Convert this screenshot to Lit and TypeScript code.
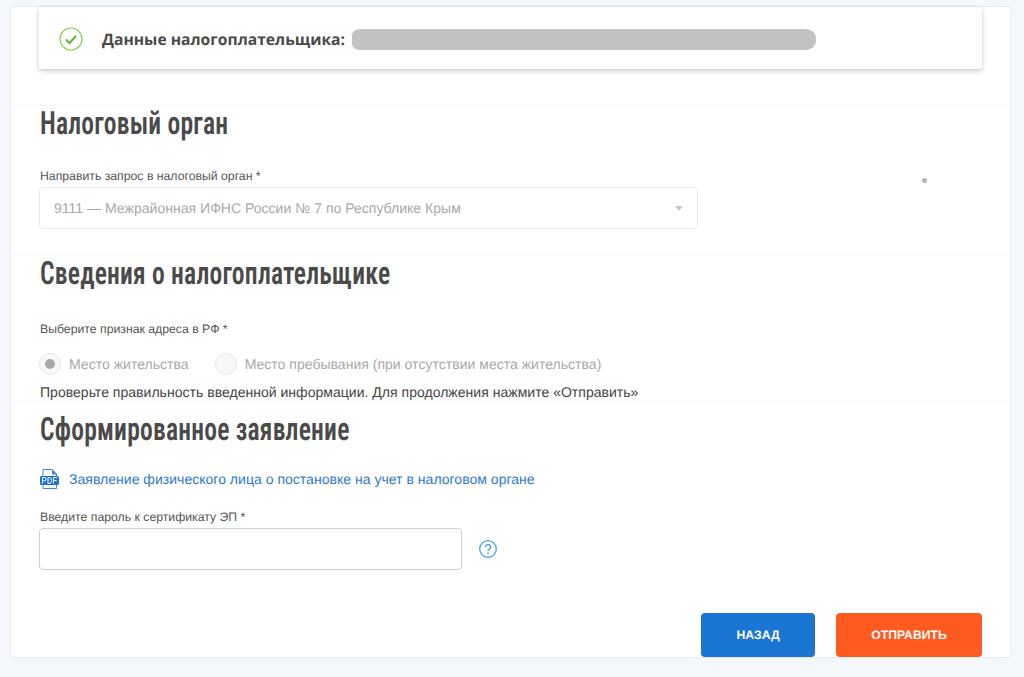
import { LitElement, html, css } from "lit";
import { customElement } from "lit/decorators.js";

@customElement("app-root")
export class AppRoot extends LitElement {
  static styles = css`
    :host { display: block; height: 677px; background: #f4f8fb; font-family: "Liberation Sans", Arial, sans-serif; color: #404040; overflow: hidden; text-rendering: geometricPrecision; }
    * { box-sizing: border-box; }
    .card { position: relative; margin: 6px 13px 0 10px; height: 652px; background: #fff; border: 1px solid #e6ebef; border-radius: 5px; display: flex; flex-direction: column; }
    .notice { margin: 0 28px; height: 62px; flex: none; display: flex; align-items: center; padding: 1px 0 0 20px; background: #fff; border-radius: 2px; box-shadow: 0 2px 5px rgba(0,0,0,.22); }
    .notice svg { flex: none; margin-right: 19px; }
    .notice b { font: 700 15.65px "Open Sans", sans-serif; color: #4a4a4a; white-space: nowrap; }
    .redact { flex: none; width: 464px; height: 21px; margin: 2px 0 0 7px; background: #c2c2c2; border-radius: 8px 10px 10px 8px / 6px 9px 9px 6px; }
    .section { padding: 0 28px; border-top: 1px solid #f7f9fa; flex: none; }
    .s1 { margin-top: 36px; height: 150px; }
    .s2 { height: 146px; }
    .s3 { flex: 1; display: flex; flex-direction: column; }
    h2 { margin: 0 0 0 1px; font: 600 32px/36px "Roboto Condensed", "Liberation Sans Narrow", sans-serif; letter-spacing: .25px; color: #4a4a4a; transform: scaleX(.8); transform-origin: left center; white-space: nowrap; }
    .label { margin-left: 1px; font-size: 12.25px; line-height: 14px; color: #555; }
    .select { display: flex; align-items: center; justify-content: space-between; width: 659px; height: 42px; padding: 0 14px 0 14px; border: 1px solid #e6ebef; border-radius: 4px; font-size: 14.05px; color: #a9a9a9; }
    .caret { width: 0; height: 0; border: 4px solid transparent; border-top: 5px solid #c8c8c8; border-bottom: 0; }
    .s1 h2 { margin-top: -1px; }
    .s1 .label { margin-top: 28px; }
    .s1 .select { margin-top: 4px; }
    .s2 h2 { margin-top: -1px; }
    .s2 .label { margin-top: 31px; }
    .radios { display: flex; align-items: center; margin-top: 17px; font-size: 14.05px; color: #a9a9a9; height: 22px; }
    .radio { width: 22px; height: 22px; border-radius: 50%; border: 1px solid #e8e8e8; background: #f8f8f8; display: flex; align-items: center; justify-content: center; margin-right: 8px; flex: none; }
    .radio i { width: 10px; height: 10px; border-radius: 50%; background: #a8a8a8; }
    .radios span { margin-right: 26px; }
    .check { margin-left: 1px; font-size: 14.05px; line-height: 16px; margin-top: 9px; color: #454545; }
    .s3 h2 { margin-top: 9px; }
    .link { display: flex; align-items: center; gap: 10px; margin-top: 21px; height: 22px; padding-left: 1px; font-size: 14.06px; color: #3279cc; }
    .s3 .label { margin-top: 20px; }
    .row { display: flex; align-items: center; margin-top: 4px; }
    .input { width: 423px; height: 42px; border: 1px solid #cfcfcf; border-radius: 4px; }
    .row svg { margin-left: 17px; }
    .actions { display: flex; justify-content: flex-end; gap: 21px; margin-top: auto; margin-bottom: 0; }
    button { height: 44px; border: 0; border-radius: 4px; color: #fff; font: 700 12.2px "Liberation Sans", sans-serif; padding: 0; text-rendering: geometricPrecision; }
    .back { width: 114px; background: #1b76d3; }
    .send { width: 146px; background: #ff5a20; }
    .dot { position: absolute; left: 911px; top: 171px; width: 5px; height: 5px; border-radius: 50%; background: #b4b4b4; }
  `;

  render() {
    return html`
      <div class="card">
        <div class="notice">
          <svg width="24" height="24" viewBox="0 0 24 24" fill="none"><circle cx="12" cy="12" r="11" stroke="#8fd14f" stroke-width="1.2"/><path d="M7 12.500l3.500 3.500L17 9" stroke="#5cb82e" stroke-width="2"/></svg>
          <b>Данные налогоплательщика:</b><div class="redact"></div>
        </div>
        <div class="section s1">
          <h2>Налоговый орган</h2>
          <div class="label">Направить запрос в налоговый орган *</div>
          <div class="select"><span>9111 — Межрайонная ИФНС России № 7 по Республике Крым</span><i class="caret"></i></div>
        </div>
        <div class="dot"></div>
        <div class="section s2">
          <h2>Сведения о налогоплательщике</h2>
          <div class="label">Выберите признак адреса в РФ *</div>
          <div class="radios">
            <div class="radio"><i></i></div><span>Место жительства</span>
            <div class="radio"></div><span>Место пребывания (при отсутствии места жительства)</span>
          </div>
          <div class="check">Проверьте правильность введенной информации. Для продолжения нажмите «Отправить»</div>
        </div>
        <div class="section s3">
          <h2>Сформированное заявление</h2>
          <div class="link">
            <svg width="19" height="22" viewBox="0 0 19 22" fill="none">
              <path d="M3 8V1.500h9l4.500 4.500V8M3 17v3.500h13.500V17" stroke="#3d8ad8" stroke-width="1"/>
              <path d="M12 1v5.500h5z" fill="#3d8ad8"/>
              <rect x="0" y="8" width="19" height="9" rx="1.500" fill="#1b76d3"/>
              <path d="M2.500 15.500v-6h2a1.500 1.500 0 0 1 0 3.200h-2M8 9.500v6h1.300a2.300 3 0 0 0 0-6zM13.500 15.500v-6h3.500M13.500 12.500h3" stroke="#fff" stroke-width="1"/>
            </svg>
            <span>Заявление физического лица о постановке на учет в налоговом органе</span>
          </div>
          <div class="label">Введите пароль к сертификату ЭП *</div>
          <div class="row">
            <div class="input"></div>
            <svg width="18" height="18" viewBox="0 0 18 18" fill="none"><circle cx="9" cy="9" r="8.300" stroke="#3f97e8" stroke-width="1.200"/><path d="M6.500 7a2.500 2.500 0 1 1 3.700 2.200C9.400 9.700 9 10.200 9 11" stroke="#3f97e8" stroke-width="1.300"/><circle cx="9" cy="13.200" r=".9" fill="#3f97e8"/></svg>
          </div>
          <div class="actions"><button class="back">НАЗАД</button><button class="send">ОТПРАВИТЬ</button></div>
        </div>
      </div>
    `;
  }
}
